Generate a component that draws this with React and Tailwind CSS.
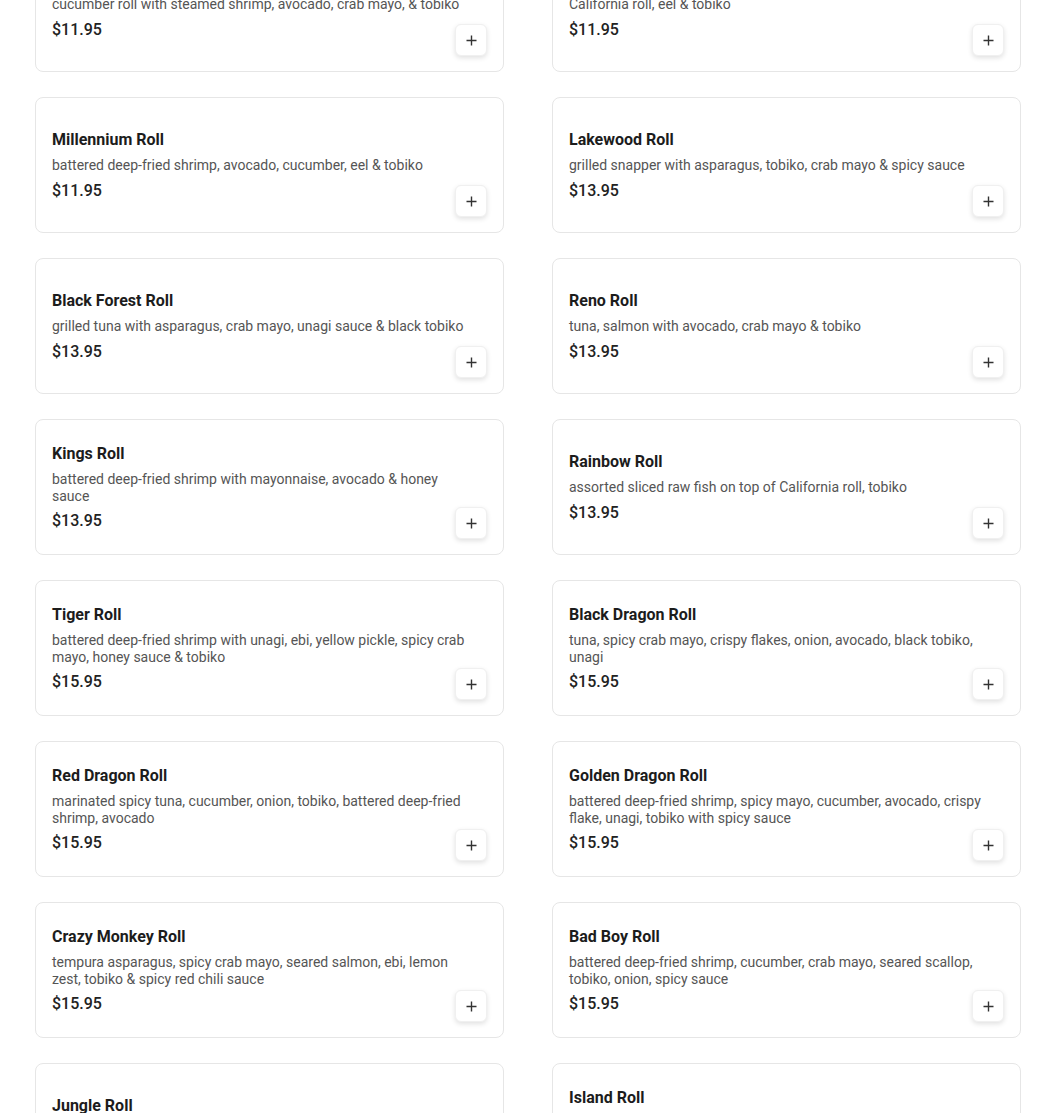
const ITEMS = [
  { name: 'Philly Roll', desc: 'cucumber roll with steamed shrimp, avocado, crab mayo, & tobiko', price: '11.95' },
  { name: 'Dragon Roll', desc: 'California roll, eel & tobiko', price: '11.95' },
  { name: 'Millennium Roll', desc: 'battered deep-fried shrimp, avocado, cucumber, eel & tobiko', price: '11.95' },
  { name: 'Lakewood Roll', desc: 'grilled snapper with asparagus, tobiko, crab mayo & spicy sauce', price: '13.95' },
  { name: 'Black Forest Roll', desc: 'grilled tuna with asparagus, crab mayo, unagi sauce & black tobiko', price: '13.95' },
  { name: 'Reno Roll', desc: 'tuna, salmon with avocado, crab mayo & tobiko', price: '13.95' },
  { name: 'Kings Roll', desc: 'battered deep-fried shrimp with mayonnaise, avocado & honey sauce', price: '13.95' },
  { name: 'Rainbow Roll', desc: 'assorted sliced raw fish on top of California roll, tobiko', price: '13.95' },
  { name: 'Tiger Roll', desc: 'battered deep-fried shrimp with unagi, ebi, yellow pickle, spicy crab mayo, honey sauce & tobiko', price: '15.95' },
  { name: 'Black Dragon Roll', desc: 'tuna, spicy crab mayo, crispy flakes, onion, avocado, black tobiko, unagi', price: '15.95' },
  { name: 'Red Dragon Roll', desc: 'marinated spicy tuna, cucumber, onion, tobiko, battered deep-fried shrimp, avocado', price: '15.95' },
  { name: 'Golden Dragon Roll', desc: 'battered deep-fried shrimp, spicy mayo, cucumber, avocado, crispy flake, unagi, tobiko with spicy sauce', price: '15.95' },
  { name: 'Crazy Monkey Roll', desc: 'tempura asparagus, spicy crab mayo, seared salmon, ebi, lemon zest, tobiko & spicy red chili sauce', price: '15.95' },
  { name: 'Bad Boy Roll', desc: 'battered deep-fried shrimp, cucumber, crab mayo, seared scallop, tobiko, onion, spicy sauce', price: '15.95' },
  { name: 'Jungle Roll', desc: 'tempura sweet potato, avocado, cucumber, mango & tobiko', price: '15.95' },
  { name: 'Island Roll', desc: 'spicy tuna, cucumber, topped with salmon, avocado, mango, tobiko, spicy mayo & eel sauce', price: '15.95' },
]

function MenuCard({ item }) {
  return (
    <div className="relative h-[136px] rounded-lg border border-[#e6e6e6] bg-white flex items-center px-4">
      <div className="pr-4 w-full">
        <div className="pt-[1px] text-base leading-6 font-bold text-[#1c1c1c]">{item.name}</div>
        <p className="mt-[5px] text-sm leading-[17px] text-[#555555]">{item.desc}</p>
        <div className="mt-[4.5px] text-base leading-6 font-medium text-[#222222]">${item.price}</div>
      </div>
      {/* add to cart */}
      <button className="absolute right-4 bottom-[15px] w-8 h-8 rounded-md bg-white border border-[#f0f0f0] shadow-[0_2px_5px_rgba(0,0,0,0.12)] flex items-center justify-center">
        <svg width="11" height="11" viewBox="0 0 11 11" fill="none" stroke="#333" strokeWidth="1.4">
          <path d="M5.5 0.5v10M0.5 5.5h10" />
        </svg>
      </button>
    </div>
  )
}

export default function App() {
  return (
    <div className="bg-white min-h-screen overflow-hidden" style={{ fontFamily: 'Roboto, "Liberation Sans", sans-serif' }}>
      <div className="-mt-[64px] pl-[35px] grid grid-cols-[469px_469px] gap-x-[48px] gap-y-[25px]">
        {ITEMS.map(item => (
          <MenuCard key={item.name} item={item} />
        ))}
      </div>
    </div>
  )
}
